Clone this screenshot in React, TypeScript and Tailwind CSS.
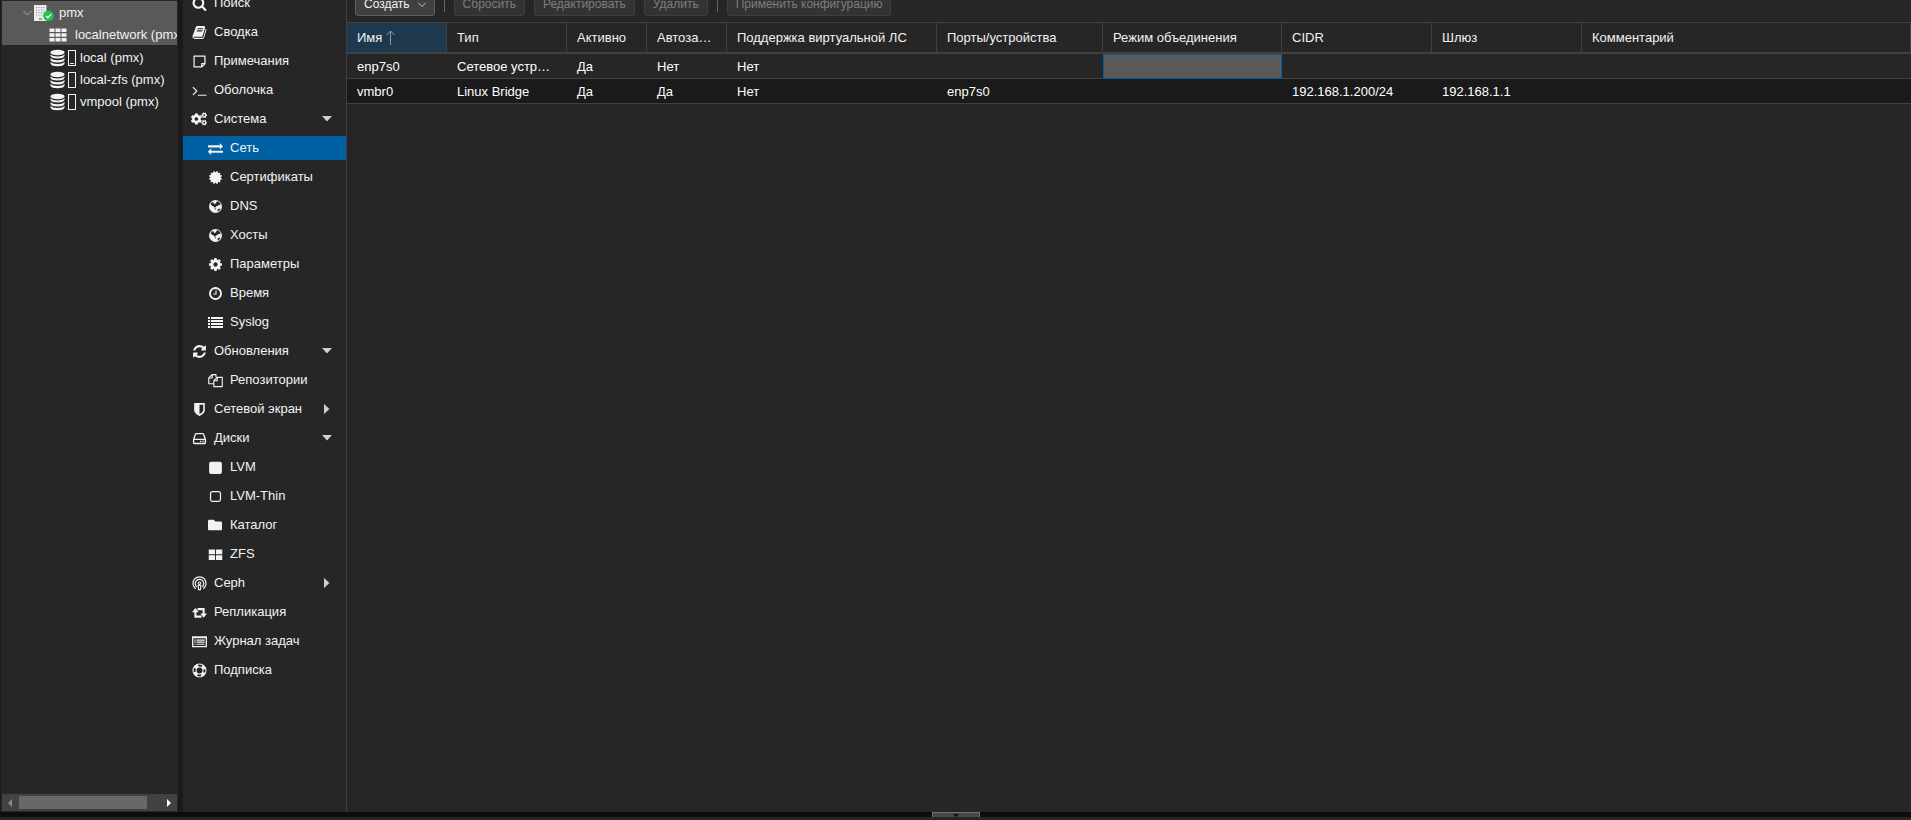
import type { ReactNode } from "react";
import { FaCogs, FaFolder } from "react-icons/fa";

const PATHS = {
   search: "M1216 832q0-185-131.5-316.5t-316.5-131.5-316.5 131.5-131.5 316.5 131.5 316.5 316.5 131.5 316.5-131.5 131.5-316.5zm512 832q0 52-38 90t-90 38q-54 0-90-38l-343-342q-179 124-399 124-143 0-273.5-55.5t-225-150-150-225-55.5-273.5 55.5-273.5 150-225 225-150 273.5-55.5 273.5 55.5 225 150 150 225 55.5 273.5q0 220-124 399l343 343q37 37 37 90z",
   book: "M1703 478q40 57 18 129l-275 906q-19 64-76.5 107.5t-122.5 43.5h-923q-77 0-148.5-53.5t-99.5-131.5q-24-67-2-127 0-4 3-27t4-37q1-8-3-21.5t-3-19.5q2-11 8-21t16.5-23.5 16.5-23.5q23-38 45-91.5t30-91.5q3-10 .5-30t-.5-28q3-11 17-28t17-23q21-36 42-92t25-90q1-9-2.5-32t.5-28q4-13 22-30.5t22-22.5q19-26 42.5-84.5t27.5-96.5q1-8-3-25.5t-2-26.5q2-8 9-18t18-23 17-21q8-12 16.5-30.5t15-35 16-36 19.5-32 26.5-23.5 36-11.5 47.5 5.5l-1 3q38-9 51-9h761q74 0 114 56t18 130l-274 906q-36 119-71.5 153.5t-128.5 34.5h-869q-27 0-38 15-11 16-1 43 24 70 144 70h923q29 0 56-15.5t35-41.5l300-987q7-22 5-57 38 15 59 43zm-1064 2q-4 13 2 22.5t20 9.5h608q13 0 25.5-9.5t16.5-22.5l21-64q4-13-2-22.5t-20-9.5h-608q-13 0-25.5 9.5t-16.5 22.5zm-83 256q-4 13 2 22.5t20 9.5h608q13 0 25.5-9.5t16.5-22.5l21-64q4-13-2-22.5t-20-9.5h-608q-13 0-25.5 9.5t-16.5 22.5z",
   terminal: "M649 983l-466 466q-10 10-23 10t-23-10l-50-50q-10-10-10-23t10-23l393-393-393-393q-10-10-10-23t10-23l50-50q10-10 23-10t23 10l466 466q10 10 10 23t-10 23zm1079 457v64q0 14-9 23t-23 9h-960q-14 0-23-9t-9-23v-64q0-14 9-23t23-9h960q14 0 23 9t9 23z",
   exchange: "M1792 1184v192q0 13-9.5 22.5t-22.5 9.5h-1376v192q0 13-9.5 22.5t-22.5 9.5q-12 0-24-10l-319-320q-9-9-9-22 0-14 9-23l320-320q9-9 23-9 13 0 22.5 9.5t9.5 22.5v192h1376q13 0 22.5 9.5t9.5 22.5zm0-544q0 14-9 23l-320 320q-9 9-23 9-13 0-22.5-9.5t-9.5-22.5v-192h-1376q-13 0-22.5-9.5t-9.5-22.5v-192q0-13 9.5-22.5t22.5-9.5h1376v-192q0-14 9-23t23-9q12 0 24 10l319 319q9 9 9 23z",
   certificate: "M1504 896l138 135q30 28 20 70-12 41-52 51l-188 48 53 186q12 41-19 70-29 31-70 19l-186-53-48 188q-10 40-51 52-12 2-19 2-31 0-51-22l-135-138-135 138q-28 30-70 20-41-11-51-52l-48-188-186 53q-41 12-70-19-31-29-19-70l53-186-188-48q-40-10-52-51-10-42 20-70l138-135-138-135q-30-28-20-70 12-41 52-51l188-48-53-186q-12-41 19-70 29-31 70-19l186 53 48-188q10-41 51-51 41-12 70 19l135 139 135-139q29-30 70-19 41 10 51 51l48 188 186-53q41-12 70 19 31 29 19 70l-53 186 188 48q40 10 52 51 10 42-20 70z",
   cog: "M1152 896q0-106-75-181t-181-75-181 75-75 181 75 181 181 75 181-75 75-181zm512-109v222q0 12-8 23t-20 13l-185 28q-19 54-39 91 35 50 107 138 10 12 10 25t-9 23q-27 37-99 108t-94 71q-12 0-26-9l-138-108q-44 23-91 38-16 136-29 186-7 28-36 28h-222q-14 0-24.5-8.5t-11.5-21.5l-28-184q-49-16-90-37l-141 107q-10 9-25 9-14 0-25-11-126-114-165-168-7-10-7-23 0-12 8-23 15-21 51-66.5t54-70.5q-27-50-41-99l-183-27q-13-2-21-12.5t-8-23.5v-222q0-12 8-23t19-13l186-28q14-46 39-92-40-57-107-138-10-12-10-24 0-10 9-23 26-36 98.5-107.5t94.5-71.5q13 0 26 10l138 107q44-23 91-38 16-136 29-186 7-28 36-28h222q14 0 24.5 8.500t11.500 21.500l28 184q49 16 90 37l142-107q9-9 24-9 13 0 25 10 129 119 165 170 7 8 7 22 0 12-8 23-15 21-51 66.500t-54 70.500q26 50 41 98l183 28q13 2 21 12.500t8 23.500z",
   clock: "M1024 544v448q0 14-9 23t-23 9h-320q-14 0-23-9t-9-23v-64q0-14 9-23t23-9h224v-352q0-14 9-23t23-9h64q14 0 23 9t9 23zm416 352q0-148-73-273t-198-198-273-73-273 73-198 198-73 273 73 273 198 198 273 73 273-73 198-198 73-273zm224 0q0 209-103 385.500t-279.500 279.500-385.500 103-385.500-103-279.500-279.500-103-385.500 103-385.500 279.500-279.500 385.500-103 385.500 103 279.500 279.500 103 385.500z",
   refresh: "M1639 1056q0 5-1 7-64 268-268 434.500t-478 166.500q-146 0-282.500-55t-243.500-157l-129 129q-19 19-45 19t-45-19-19-45v-448q0-26 19-45t45-19h448q26 0 45 19t19 45-19 45l-137 137q71 66 161 102t187 36q134 0 250-65t186-179q11-17 53-117 8-23 30-23h192q13 0 22.500 9.500t9.500 22.500zm25-800v448q0 26-19 45t-45 19h-448q-26 0-45-19t-19-45 19-45l138-138q-148-137-349-137-134 0-250 65t-186 179q-11 17-53 117-8 23-30 23h-199q-13 0-22.500-9.500t-9.500-22.500v-7q65-268 270-434.500t480-166.500q146 0 284 55.500t245 156.500l130-129q19-19 45-19t45 19 19 45z",
   shield: "M1344 960v-640h-448v1137q119-63 213-137 235-184 235-360zm192-768v768q0 86-33.500 170.500t-83 150-118 127.500-126.500 103-121 77.500-89.500 49.500-42.500 20q-12 6-26 6t-26-6q-16-7-42.500-20t-89.500-49.500-121-77.500-126.500-103-118-127.500-83-150-33.500-170.500v-768q0-26 19-45t45-19h1152q26 0 45 19t19 45z",
};

function Glyph({ name }: { name: keyof typeof PATHS }) {
   return (
      <svg viewBox="0 0 1792 1792" className="size-[15px]" fill="currentColor" aria-hidden="true">
         <path d={PATHS[name]} />
      </svg>
   );
}

/* Small drawings on a 16px grid */
function Drawing({ children }: { children: ReactNode }) {
   return (
      <svg viewBox="0 0 16 16" className="size-[15px]" fill="none" stroke="currentColor" aria-hidden="true">
         {children}
      </svg>
   );
}

const noteIcon = (
   <Drawing>
      <path d="M2.2 2.200h11.600v8.300l-3.300 3.300H2.200zM13.800 10.300h-3.500v3.500" strokeWidth="1.300" strokeLinejoin="round" />
   </Drawing>
);

const globeIcon = (
   <Drawing>
      <circle cx="8" cy="8" r="6.900" fill="currentColor" stroke="none" />
      <path
         d="M9.400 2.300l2 .6 1.900 2-.3 1.700-1.500-.5-.9 1.100-1.500.3-.8 1.300-1.500.3-1-1.300-1.900-.8-1-1.700 1-1.500 1.600-.6.300 1.300 1.500.8 1.300-.8zM7.200 9.800l1.500.4-.3 1-1.200-.4zM10.300 11.200l2-1 .9.300-1.300 2-1.900.9z"
         fill="#262626"
         stroke="none"
      />
   </Drawing>
);

const listIcon = (
   <Drawing>
      <path d="M0 3.200h2.200M3.200 3.200H16M0 6.400h2.200M3.200 6.400H16M0 9.600h2.200M3.200 9.600H16M0 12.800h2.200M3.200 12.800H16" strokeWidth="2" />
   </Drawing>
);

const filesIcon = (
   <Drawing>
      <path d="M6 11.500H.8V5.200L4.300 1.700h4.200v2.800M.9 5.300h3.600V1.800M6.200 14.500V8.200l3.500-3.500h5.500v9.800zM6.300 8.300h3.600V4.800" strokeWidth="1.200" strokeLinejoin="round" />
   </Drawing>
);

const diskIcon = (
   <Drawing>
      <path d="M1.700 9l2-5.700q.2-.6.900-.6h6.800q.7 0 .9.600l2 5.700v3.600q0 .7-.7.700H2.400q-.7 0-.7-.7zM1.700 9h12.600" strokeWidth="1.400" />
      <path d="M8.500 11.100h1.400M11.200 11.100h1.400" strokeWidth="1.400" />
   </Drawing>
);

const cephIcon = (
   <Drawing>
      <circle cx="8" cy="7.700" r="1.300" strokeWidth="1.200" />
      <path d="M3.900 13.500A7 7 0 1 1 12.100 13.500M5 11.400A4.500 4.500 0 1 1 11 11.400" strokeWidth="1.300" />
      <path d="M6.500 10.200q1.500-1 3 0l-.5 4.300H7z" strokeWidth="1.200" />
   </Drawing>
);

const retweetIcon = (
   <Drawing>
      <path d="M3.600 6v6.400h6.600M5.800 4.400h6.600v6.400" strokeWidth="2.200" />
      <path d="M3.600 3.200L7.200 7.800H0zM12.400 13.600L8.800 9H16z" fill="currentColor" stroke="none" />
   </Drawing>
);

const listAltIcon = (
   <Drawing>
      <path d="M.7 3.200h14.600v10.200H.7zM.7 3.800h14.600" strokeWidth="1.400" />
      <path d="M2.500 6.500h1.400M4.800 6.500h8.700M2.500 8.700h1.400M4.800 8.700h8.700M2.500 10.900h1.400M4.800 10.900h8.700" strokeWidth="1.200" />
   </Drawing>
);

const ringIcon = (
   <Drawing>
      <circle cx="8" cy="8" r="5.300" strokeWidth="4.400" />
      <circle cx="8" cy="8" r="5.300" strokeWidth="2" stroke="#262626" strokeDasharray="4.160 4.160" strokeDashoffset="2.080" />
   </Drawing>
);

interface NavItem {
   label: string;
   icon: ReactNode;
   child?: boolean;
   arrow?: "down" | "right";
   selected?: boolean;
}

const NAV: NavItem[] = [
   { label: "Поиск", icon: <Glyph name="search" /> },
   { label: "Сводка", icon: <Glyph name="book" /> },
   { label: "Примечания", icon: noteIcon },
   { label: "Оболочка", icon: <Glyph name="terminal" /> },
   { label: "Система", icon: <FaCogs className="size-4" />, arrow: "down" },
   { label: "Сеть", icon: <Glyph name="exchange" />, child: true, selected: true },
   { label: "Сертификаты", icon: <Glyph name="certificate" />, child: true },
   { label: "DNS", icon: globeIcon, child: true },
   { label: "Хосты", icon: globeIcon, child: true },
   { label: "Параметры", icon: <Glyph name="cog" />, child: true },
   { label: "Время", icon: <Glyph name="clock" />, child: true },
   { label: "Syslog", icon: listIcon, child: true },
   { label: "Обновления", icon: <Glyph name="refresh" />, arrow: "down" },
   { label: "Репозитории", icon: filesIcon, child: true },
   { label: "Сетевой экран", icon: <Glyph name="shield" />, arrow: "right" },
   { label: "Диски", icon: diskIcon, arrow: "down" },
   {
      label: "LVM",
      child: true,
      icon: (
         <Drawing>
            <rect x="1.200" y="1.800" width="13.600" height="13" rx="2" fill="currentColor" stroke="none" />
         </Drawing>
      ),
   },
   {
      label: "LVM-Thin",
      child: true,
      icon: (
         <Drawing>
            <rect x="2.700" y="2.700" width="10.600" height="10.600" rx="2" strokeWidth="1.300" />
         </Drawing>
      ),
   },
   { label: "Каталог", icon: <FaFolder className="size-3.5" />, child: true },
   {
      label: "ZFS",
      child: true,
      icon: (
         <Drawing>
            <path d="M.8 2.600h6.700v5H.8zM8.500 2.600h6.700v5H8.500zM.8 8.800h6.700v5H.8zM8.500 8.800h6.700v5H8.500z" fill="currentColor" stroke="none" />
         </Drawing>
      ),
   },
   { label: "Ceph", icon: cephIcon, arrow: "right" },
   { label: "Репликация", icon: retweetIcon },
   { label: "Журнал задач", icon: listAltIcon },
   { label: "Подписка", icon: ringIcon },
];

const COLUMNS = [
   { label: "Имя", width: "w-[100px]" },
   { label: "Тип", width: "w-[120px]" },
   { label: "Активно", width: "w-20" },
   { label: "Автозапуск", width: "w-20" },
   { label: "Поддержка виртуальной ЛС", width: "w-[210px]" },
   { label: "Порты/устройства", width: "w-[166px]" },
   { label: "Режим объединения", width: "w-[179px]" },
   { label: "CIDR", width: "w-[150px]" },
   { label: "Шлюз", width: "w-[150px]" },
   { label: "Комментарий", width: "" },
];

const ROWS = [
   ["enp7s0", "Сетевое устройство", "Да", "Нет", "Нет", "", "", "", "", ""],
   ["vmbr0", "Linux Bridge", "Да", "Да", "Нет", "enp7s0", "", "192.168.1.200/24", "192.168.1.1", ""],
];

const STORAGES = ["local (pmx)", "local-zfs (pmx)", "vmpool (pmx)"];

function StorageIcon({ used }: { used: boolean }) {
   return (
      <svg viewBox="0 0 27 18" className="h-[18px] w-[27px] shrink-0" aria-hidden="true">
         <g fill="#f2f2f2">
            <ellipse cx="7.500" cy="3.500" rx="7" ry="2.700" />
            <path d="M.5 5.200q2 2.200 7 2.200t7-2.200v1.900q-1 2.500-7 2.500t-7-2.500z" />
            <path d="M.5 9q2 2.200 7 2.200T14.500 9v1.900q-1 2.500-7 2.500t-7-2.500z" />
            <path d="M.5 12.800q2 2.200 7 2.200t7-2.200v1.900q-1 2.500-7 2.500t-7-2.500z" />
         </g>
         <rect x="18.500" y="1.500" width="7" height="15" fill="none" stroke="#f2f2f2" />
         {used && <path d="M20 14.500h4" stroke="#f2f2f2" />}
      </svg>
   );
}

function ResourceTree() {
   return (
      <nav className="flex w-[179px] shrink-0 flex-col border-x border-[#1a1a1a] px-px text-[#f2f2f2]">
         <div className="flex-1 overflow-hidden whitespace-nowrap pt-px">
            <div className="bg-[#595959]">
               <a href="#pmx" className="flex h-6 items-center pl-5">
                  <svg viewBox="0 0 12 8" className="h-2 w-3" fill="none" stroke="#b0b0b0" aria-hidden="true">
                     <path d="M1.500 2l4 4 4-4" />
                  </svg>
                  <svg viewBox="0 0 20 18" className="mr-[5px] h-[18px] w-5" aria-hidden="true">
                     <path d="M0 1h12.500v16H0z" fill="#ececec" />
                     <path d="M2.500 3v9M5 3v9M7.500 3v9M10 3v6" stroke="#8a8a8a" strokeDasharray="1 1.500" />
                     <path d="M5 15h3" stroke="#555" />
                     <circle cx="14.500" cy="11.700" r="5.300" fill="#21bf4b" />
                     <path d="M12 11.900l1.800 1.800 3.300-3.600" fill="none" stroke="#fff" strokeWidth="1.300" />
                  </svg>
                  pmx
               </a>
               <a href="#localnetwork" className="flex h-5 items-center pl-[47px]">
                  <svg viewBox="0 0 18 14" className="mr-2 h-3.5 w-[18px] shrink-0" fill="#f2f2f2" aria-hidden="true">
                     <path d="M.5.500h5v3.500h-5zM6.500.500h5v3.500h-5zM12.500.500h5v3.500h-5zM.5 5.200h5v3.500h-5zM6.500 5.200h5v3.500h-5zM12.500 5.200h5v3.500h-5zM.5 9.900h5v3.500h-5zM6.500 9.900h5v3.500h-5zM12.500 9.900h5v3.500h-5z" />
                  </svg>
                  localnetwork (pmx)
               </a>
            </div>
            <div className="pt-0.5">
               {STORAGES.map((name, i) => (
                  <a key={name} href="#storage" className="flex h-[22px] items-center gap-[3px] pl-12">
                     <StorageIcon used={i === 0} />
                     {name}
                  </a>
               ))}
            </div>
         </div>
         <div className="mb-px flex h-[17px] items-center justify-between bg-[#424242] px-1.5">
            <svg viewBox="0 0 4 8" className="h-2 w-1" fill="#8a8a8a" aria-hidden="true">
               <path d="M4 0v8L0 4z" />
            </svg>
            <div className="ml-[7px] h-[13px] w-32 bg-[#686868]" />
            <svg viewBox="0 0 4 8" className="ml-auto h-2 w-1" fill="#fff" aria-hidden="true">
               <path d="M0 0v8l4-4z" />
            </svg>
         </div>
      </nav>
   );
}

function SideMenu() {
   return (
      <nav className="-mt-[9px] w-[163px] shrink-0 text-[#f2f2f2]">
         {NAV.map((item) => (
            <a
               key={item.label}
               href="#menu"
               className={`mb-[5px] flex h-6 items-center pr-3.5 ${item.child ? "pl-6" : "pl-2"} ${item.selected ? "bg-[#0060a4]" : ""}`}
            >
               <span className="mr-[7px] flex w-4 justify-center">{item.icon}</span>
               <span className="flex-1">{item.label}</span>
               {item.arrow === "down" && (
                  <svg viewBox="0 0 10 6" className="h-1.5 w-2.5" fill="#d0d0d0" aria-hidden="true">
                     <path d="M0 0h10L5 5.500z" />
                  </svg>
               )}
               {item.arrow === "right" && (
                  <svg viewBox="0 0 10 10" className="h-2.5 w-2.5" fill="#d0d0d0" aria-hidden="true">
                     <path d="M2 0v10l5.500-5z" />
                  </svg>
               )}
            </a>
         ))}
      </nav>
   );
}

function ToolButton({ children }: { children: ReactNode }) {
   return (
      <button disabled className="h-6 rounded-[3px] border border-[#404040] bg-[#333] px-2 text-[#7d7d7d]">
         {children}
      </button>
   );
}

function NetworkPanel() {
   return (
      <main className="min-w-0 flex-1 border-l border-[#404040]">
         <div className="-mt-2 flex items-center gap-[9px] pb-1.5 pl-2 text-xs">
            <button className="flex h-6 items-center gap-2 rounded-[3px] border border-[#606060] bg-[#404040] px-2 text-[#f2f2f2]">
               Создать
               <svg viewBox="0 0 8 5" className="h-[5px] w-2" fill="none" stroke="#c0c0c0" aria-hidden="true">
                  <path d="M0 .5l4 4 4-4" />
               </svg>
            </button>
            <span className="h-4 w-px bg-[#666]" />
            <ToolButton>Сбросить</ToolButton>
            <ToolButton>Редактировать</ToolButton>
            <ToolButton>Удалить</ToolButton>
            <span className="h-4 w-px bg-[#666]" />
            <ToolButton>Применить конфигурацию</ToolButton>
         </div>
         <table className="w-full table-fixed border-separate border-spacing-0 text-left text-[#f2f2f2]">
            <thead>
               <tr className="h-8">
                  {COLUMNS.map((col, i) => (
                     <th
                        key={col.label}
                        className={`truncate border-t border-r border-b-2 border-[#404040] pr-2 pl-2.5 font-normal ${col.width} ${i === 0 ? "bg-[#1e384d]" : ""}`}
                     >
                        {col.label}
                        {i === 0 && (
                           <svg viewBox="0 0 9 15" className="ml-1 inline h-[15px] w-[9px] align-text-bottom" fill="none" stroke="#9a9a9a" aria-hidden="true">
                              <path d="M4.500 15V1M.5 5l4-4 4 4" />
                           </svg>
                        )}
                     </th>
                  ))}
               </tr>
            </thead>
            <tbody className="text-white">
               {ROWS.map((row, r) => (
                  <tr key={row[0]} className={r === 1 ? "h-[25px] bg-[#1a1a1a]" : "h-[25px]"}>
                     {row.map((cell, c) => (
                        <td
                           key={COLUMNS[c].label}
                           className={`truncate border-b border-[#404040] pt-px pr-4 pl-2.5 ${r === 0 && c === 6 ? "bg-[#595959] outline -outline-offset-1 outline-[#0060a4]" : ""}`}
                        >
                           {cell}
                        </td>
                     ))}
                  </tr>
               ))}
            </tbody>
         </table>
      </main>
   );
}

export default function App() {
   return (
      <div className="flex h-screen flex-col overflow-hidden bg-[#262626] font-['Liberation_Sans',Arial,sans-serif] text-[13px] leading-4">
         <div className="flex min-h-0 flex-1">
            <ResourceTree />
            <div className="w-1 shrink-0 bg-[#1a1a1a]" />
            <SideMenu />
            <NetworkPanel />
         </div>
         <div className="flex h-[5px] shrink-0 justify-center bg-[#0d0d0d]">
            <button aria-label="Развернуть" className="flex w-12 justify-center border border-b-0 border-[#707070] bg-[#484848]">
               <svg viewBox="0 0 8 4" className="mt-px h-[3px] w-2" fill="#0d0d0d" aria-hidden="true">
                  <path d="M0 0h8L4 4z" />
               </svg>
            </button>
         </div>
         <div className="h-[3px] shrink-0 bg-[#282627]" />
      </div>
   );
}
